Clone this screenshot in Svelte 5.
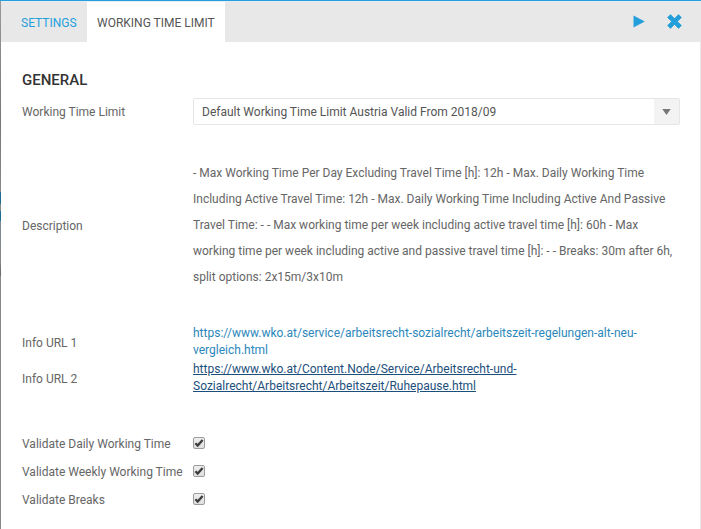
<script>
  const description = [
    '- Max Working Time Per Day Excluding Travel Time [h]: 12h - Max. Daily Working Time',
    'Including Active Travel Time: 12h - Max. Daily Working Time Including Active And Passive',
    'Travel Time: - - Max working time per week including active travel time [h]: 60h - Max',
    'working time per week including active and passive travel time [h]: - - Breaks: 30m after 6h,',
    'split options: 2x15m/3x10m'
  ];
  const checks = ['Validate Daily Working Time', 'Validate Weekly Working Time', 'Validate Breaks'];
</script>

<div class="window">
  <div class="edge"></div>
  <div class="panel">
    <header>
      <div class="tab link">SETTINGS</div>
      <div class="tab active">WORKING TIME LIMIT</div>
      <div class="actions">
        <svg width="12" height="13" viewBox="0 0 12 13"><path d="M0.5 0.5 11.8 6.5 0.5 12.5Z" fill="#259fdc" /></svg>
        <svg class="close" width="15" height="15" viewBox="0 0 15 15"><path d="M3.5 .5.5 3.5 4.5 7.5.5 11.5 3.5 14.5 7.5 10.5 11.5 14.5 14.5 11.5 10.5 7.5 14.5 3.5 11.5.5 7.5 4.5Z" fill="#259fdc" stroke="#259fdc" stroke-width=".6" stroke-linejoin="round" /></svg>
      </div>
    </header>
    <main>
      <h2>GENERAL</h2>
      <div class="row select-row">
        <span>Working Time Limit</span>
        <div class="select">
          <span>Default Working Time Limit Austria Valid From 2018/09</span>
          <div class="arrow"><svg width="9" height="6" viewBox="0 0 9 6"><path d="M.3 0H8.7L4.5 6Z" fill="#777" /></svg></div>
        </div>
      </div>
      <div class="row desc">
        <span>Description</span>
        <div>{#each description as line}<div class="line">{line}</div>{/each}</div>
      </div>
      <div class="row url first">
        <span>Info URL 1</span>
        <div class="link">https://www.wko.at/service/arbeitsrecht-sozialrecht/arbeitszeit-regelungen-alt-neu-<br />vergleich.html</div>
      </div>
      <div class="row url">
        <span>Info URL 2</span>
        <div class="hover">https://www.wko.at/Content.Node/Service/Arbeitsrecht-und-<br />Sozialrecht/Arbeitsrecht/Arbeitszeit/Ruhepause.html</div>
      </div>
      <div class="checks">
        {#each checks as label}
          <div class="row check">
            <span>{label}</span>
            <div class="box"><svg width="10" height="10" viewBox="0 0 10 10"><path d="M1.4 5.2 3.7 7.6 8.6 1.9" fill="none" stroke="#3c3c3c" stroke-width="2.3" /></svg></div>
          </div>
        {/each}
      </div>
    </main>
  </div>
</div>

<style>
  :global(body) { margin: 0; background: #fff; }
  .window {
    box-sizing: border-box; width: 701px; height: 529px; display: flex; overflow: hidden;
    font: 12px/17px Roboto, "Liberation Sans", sans-serif; color: #666; white-space: nowrap;
    border-top: 1px solid #259fdc;
  }
  .edge {
    width: 1px; flex: none;
    background: linear-gradient(#999 0, #777 120px, #888 191px, #1f6d97 191px, #1f6d97 203px, #888 203px, #888 210px, #1f6d97 210px, #1f6d97 220px, #7b8a93 220px, #888 260px, #666 274px, #888 275px, #888);
  }
  .panel { flex: 1; border-top: 1px solid #e3eff5; border-right: 1px solid #e8e8e8; box-sizing: border-box; }
  header { height: 40px; background: #e8e8e8; display: flex; line-height: 43px; }
  .tab { box-sizing: border-box; padding-left: 20px; width: 86px; height: 40px; }
  .tab.link { color: #259fdc; }
  .tab.active { background: #fff; width: 138px; padding-left: 10px; color: #555; }
  .actions { margin-left: auto; padding: 0 18px 2px 0; display: flex; align-items: center; gap: 22px; }
  main { padding: 28px 20px 0 21px; }
  h2 { margin: 0; font-size: 15px; line-height: 20px; font-weight: 500; color: #333; }
  .row { display: grid; grid-template-columns: 171px 1fr; align-items: center; }
  .row > span, .select > span { padding-top: 2px; }
  .select-row { margin-top: 8px; }
  .select { box-sizing: border-box; height: 27px; border: 1px solid #e6e6e6; border-radius: 2px; display: flex; align-items: center; padding-left: 8px; color: #555; }
  .arrow { margin-left: auto; width: 25px; height: 25px; background: #f3f3f3; display: flex; align-items: center; justify-content: center; }
  .desc { margin-top: 35px; }
  .line { line-height: 26px; }
  .first { margin-top: 34px; }
  .url { height: 36px; }
  .url .link { color: #2b87bb; }
  .hover { color: #1d4f7c; text-decoration: underline; }
  .checks { margin-top: 33px; }
  .check { height: 28px; }
  .box { width: 10px; height: 10px; border: 1px solid #9c9c9c; border-radius: 2px; background: linear-gradient(#eee, #dedede); }
  svg { display: block; }
</style>
